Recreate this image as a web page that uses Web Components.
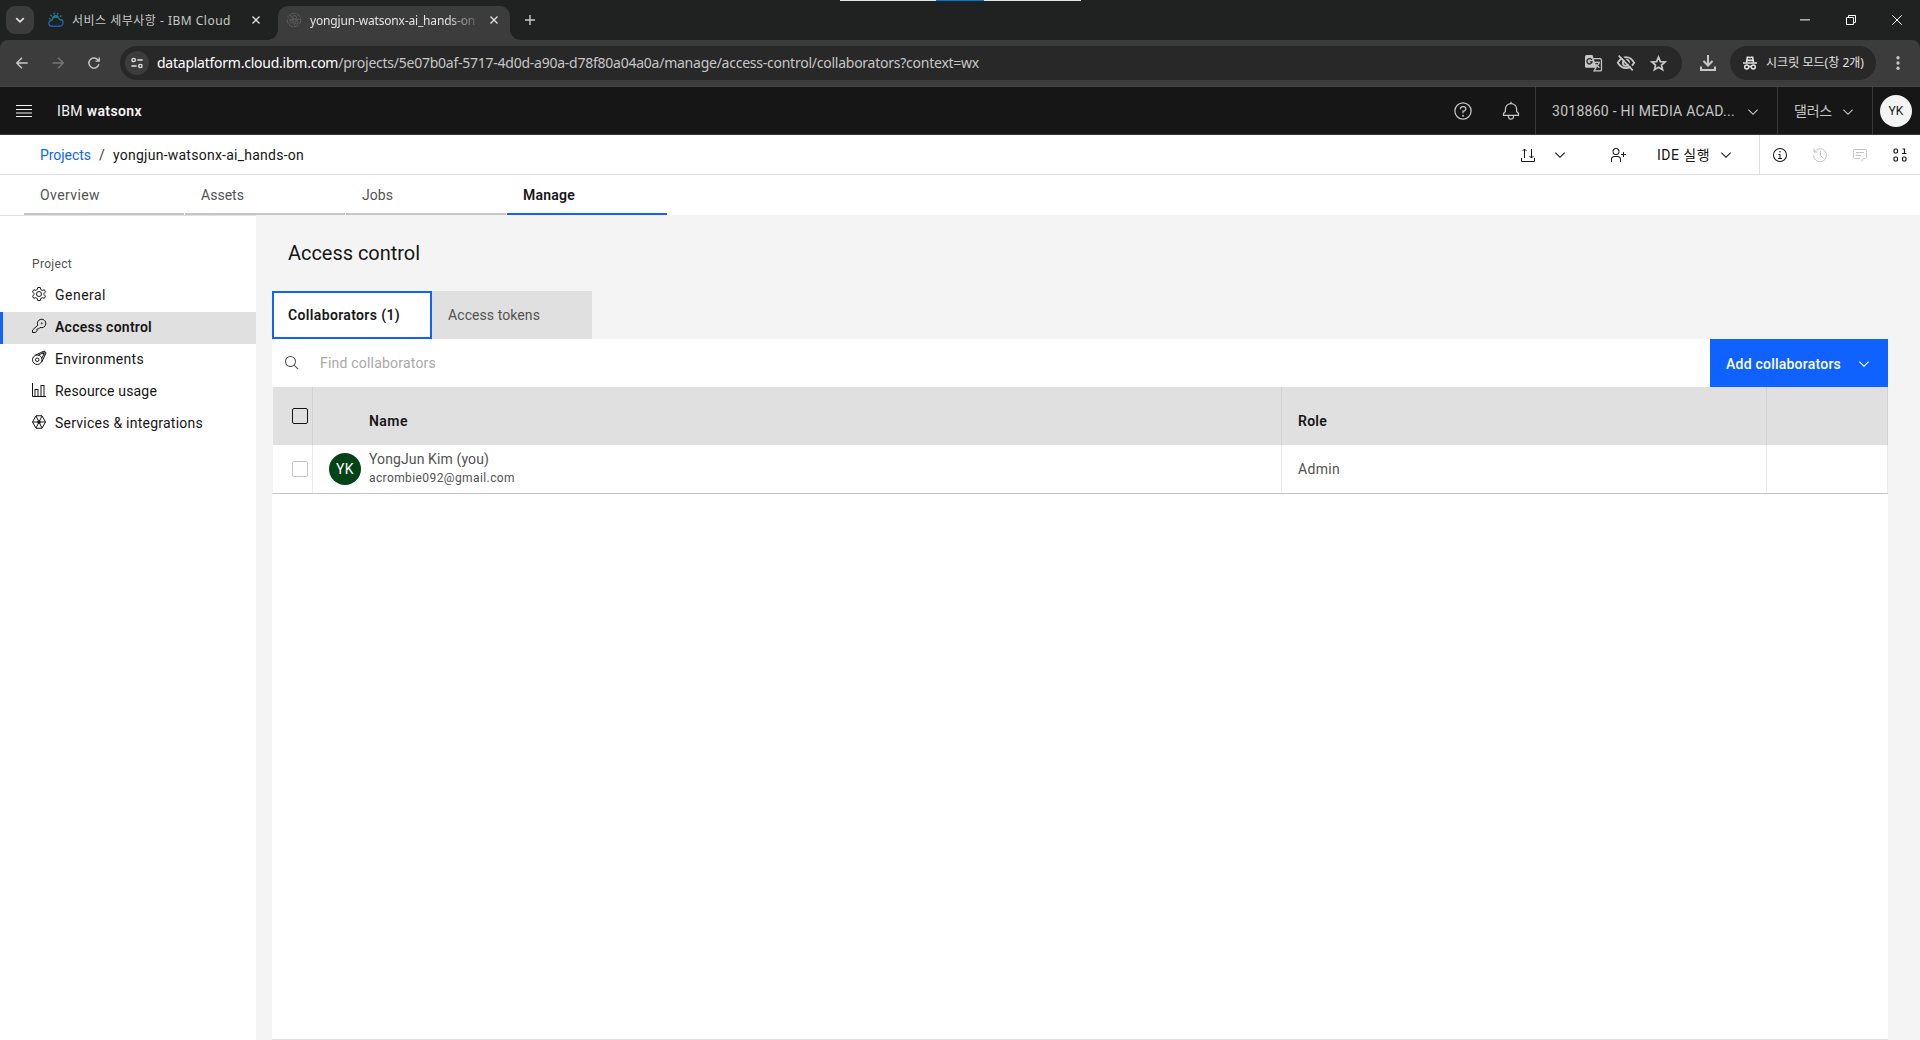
<!DOCTYPE html>
<html lang="ko">
<head>
<meta charset="utf-8">
<title>yongjun-watsonx-ai_hands-on</title>
<style>
  html, body { height: 100%; overflow: hidden; }
  body {
    margin: 0;
    background: #f4f4f4;
    color: #161616;
    font: 14px/18px Roboto, "Noto Sans CJK KR", sans-serif;
  }
</style>
</head>
<body>
<app-window></app-window>

<script>
// base class: every element renders its css() and html() in an open shadow root
class Base extends HTMLElement {

  constructor() {
    super();
    this.attachShadow({ mode: 'open' });
  }

  connectedCallback() {
    this.render();
  }

  render() {
    this.shadowRoot.innerHTML = `
      <style>
        *, :host { box-sizing: border-box; }
        :host { display: flex; }
        ${this.css()}
      </style>
      ${this.html()}`;
  }

  html() { return '<slot></slot>'; }
  css() { return ''; }
}

const circle = '<path d="M16,2A14,14,0,1,0,30,16,14,14,0,0,0,16,2Zm0,26A12,12,0,1,1,28,16,12,12,0,0,1,16,28Z"/>';

// all on a 32 x 32 grid, "line" icons are stroked
const ICONS = {
  chevron: '<path d="M16 22L6 12 7.4 10.6 16 19.2 24.6 10.6 26 12z"/>',
  help: circle + '<circle cx="16" cy="23.5" r="1.5"/><path d="M17,8H15.5A4.49,4.49,0,0,0,11,12.5V13h2v-.5A2.5,2.5,0,0,1,15.5,10H17a2.5,2.5,0,0,1,0,5H15v4.5h2V17a4.5,4.5,0,0,0,0-9Z"/>',
  info: circle + '<path d="M17 22L17 14 13 14 13 16 15 16 15 22 12 22 12 24 20 24 20 22 17 22z"/><circle cx="16" cy="9.5" r="1.5"/>',
  bell: '<path d="M28.7071,19.293,26,16.5859V13a10.0136,10.0136,0,0,0-9-9.9492V1H15V3.0508A10.0136,10.0136,0,0,0,6,13v3.5859L3.2929,19.293A1,1,0,0,0,3,20v3a1,1,0,0,0,1,1h7v.7768a5.152,5.152,0,0,0,4.5,5.1987A5.0057,5.0057,0,0,0,21,25V24h7a1,1,0,0,0,1-1V20A1,1,0,0,0,28.7071,19.293ZM19,25a3,3,0,0,1-6,0V24h6Zm8-3H5V20.4141L7.707,17.707A1,1,0,0,0,8,17V13a8,8,0,0,1,16,0v4a1,1,0,0,0,.293.707L27,20.4141Z"/>',
  userAdd: '<path d="M32 14L28 14 28 10 26 10 26 14 22 14 22 16 26 16 26 20 28 20 28 16 32 16 32 14z"/><path d="M12,4A5,5,0,1,1,7,9a5,5,0,0,1,5-5m0-2a7,7,0,1,0,7,7A7,7,0,0,0,12,2Z"/><path d="M22,30H20V25a5,5,0,0,0-5-5H9a5,5,0,0,0-5,5v5H2V25a7,7,0,0,1,7-7h6a7,7,0,0,1,7,7Z"/>',
  search: '<path d="M29,27.5859l-7.5521-7.5521a11.0177,11.0177,0,1,0-1.4141,1.4141L27.5859,29ZM4,13a9,9,0,1,1,9,9A9.01,9.01,0,0,1,4,13Z"/>',
  menu: '<path d="M0 4h32v2H0zM0 12h32v2H0zM0 19h32v2H0zM0 26h32v2H0z"/>',
  transfer: '<g class="line"><path d="M3 22v7h26v-7M9 22V4M5 8l4-4 4 4M23 4v18M19 18l4 4 4-4"/></g>',
  history: '<g class="line"><path d="M4 3v7h7M4.700 10A13 13 0 1 1 3 17M17 8v9l6 6"/></g>',
  comment: '<g class="line"><path d="M19 29l4-6h4a2 2 0 0 0 2-2V7a2 2 0 0 0-2-2H5a2 2 0 0 0-2 2v14a2 2 0 0 0 2 2h11M8 11h16M8 17h10"/></g>',
  data: '<g class="line" stroke-width="2.400"><rect x="4" y="4" width="7" height="8" rx="2.500"/><rect x="4" y="20" width="7" height="8" rx="2.500"/><rect x="21" y="20" width="7" height="8" rx="2.500"/><path d="M21 4h4v9M20 13h9"/></g>',
  gear: '<g class="line"><circle cx="16" cy="16" r="5"/><path d="M13.500 3h5l1 4 3 1.700 4-1.100 2.500 4.300-2.900 2.900v2.500l2.900 2.900-2.500 4.300-4-1.100-3 1.700-1 4h-5l-1-4-3-1.700-4 1.100L3 20.200l2.900-2.900v-2.500L3 11.900l2.500-4.300 4 1.100 3-1.700z"/></g>',
  key: '<g class="line"><path d="M13.500 14.500a8.500 8.500 0 1 1 4.500 4.300L15 22h-3v3L9 29H3v-5z"/><circle cx="21.500" cy="10.500" r="1"/></g>',
  env: '<g class="line"><circle cx="12.500" cy="19.500" r="9.500"/><circle cx="12.500" cy="19.500" r="3.500"/><path d="M8.500 10.500L25 2.500c3-.500 5 1.500 4.500 4.500L21.500 24M15 10l9-4 2 2-4.500 9"/><circle cx="26" cy="6" r="2.500"/></g>',
  bars: '<path d="M27,28V6H19V28H15V14H7V28H4V2H2V28a2,2,0,0,0,2,2H30V28ZM13,28H9V16h4Zm12,0H21V8h4Z"/>',
  services: '<g class="line"><path d="M10 3.500h12L29 16l-7 12.500H10L3 16zM3 16h26M10 4l12 24M22 4L10 28"/></g><circle cx="16" cy="16" r="3.500"/>',
  back: '<g class="line" stroke-width="3.800"><path d="M31 16H3M16 2L2 16l14 14"/></g>',
  forward: '<g class="line" stroke-width="3.800"><path d="M1 16h28M16 2l14 14-14 14"/></g>',
  reload: '<g class="line" stroke-width="3.800"><path d="M29 19a13.500 13.500 0 1 1-2-10.500l2 2M30 1v10H20"/></g>',
  tune: '<g class="line" stroke-width="3.600"><circle cx="7" cy="8" r="4.500"/><path d="M17 8h14M1 24h14"/><circle cx="25" cy="24" r="4.500"/></g>',
  down: '<g class="line" stroke-width="4.500"><path d="M6 11l10 10 10-10"/></g>',
  close: '<g class="line" stroke-width="5"><path d="M2 2l28 28M30 2L2 30"/></g>',
  plus: '<g class="line" stroke-width="4.500"><path d="M16 0v32M0 16h32"/></g>',
  minimize: '<path d="M0 14h32v3.200H0z"/>',
  restore: '<g class="line" stroke-width="3.200"><path d="M1.600 8h22.400v22.400H1.600zM8 8V1.600h22.400V24H24"/></g>',
  winClose: '<g class="line" stroke-width="3.200"><path d="M1 1l30 30M31 1L1 31"/></g>',
  more: '<circle cx="16" cy="4" r="3.800"/><circle cx="16" cy="16" r="3.800"/><circle cx="16" cy="28" r="3.800"/>',
  star: '<g class="line" stroke-width="3.200"><path d="M16 4l3.500 8.400 9 .8-6.900 5.900 2.100 8.800L16 23.200l-7.700 4.700 2.100-8.800-6.900-5.900 9-.8z"/></g>',
  eyeOff: '<g class="line" stroke-width="3.200"><path d="M1.500 15.500C5 9 10 5.500 16 5.500s11 3.500 14.500 10c-3.500 6-8.500 9.500-14.500 9.500S5 21.500 1.500 15.500z"/><circle cx="16" cy="15.500" r="5.500"/></g><path d="M6 1.500l24 25" stroke="#282828" stroke-width="3"/><path d="M3 3l25 26" stroke="currentColor" stroke-width="3"/>',
  download: '<g class="line" stroke-width="4"><path d="M16 0v20M7 12l9 9 9-9M2 23v7h28v-7"/></g>',
  translate: '<path d="M3 0h11l8 24H3a3 3 0 0 1-3-3V3a3 3 0 0 1 3-3z"/><g class="line" stroke-width="2.400"><path d="M16 7h12a3 3 0 0 1 3 3v18a2 2 0 0 1-2 2H17l4-7M18 14h10M23 12v2M27 14c-1 5-4 7-7 9M20 17l7 7"/></g><path d="M13 9.500a5 5 0 1 0 .5 3.500H9" fill="none" stroke="#282828" stroke-width="2.400"/>',
  incognito: '<g class="line" stroke-width="3.600"><path d="M8 14l2-11h3l3 1 3-1h3l2 11M9 10h14M0 16h32"/><circle cx="8.500" cy="25" r="4.500"/><circle cx="23.500" cy="25" r="4.500"/><path d="M13 24h6"/></g>',
  cloud: '<defs><linearGradient id="g" gradientUnits="userSpaceOnUse" x1="0" y1="0" x2="0" y2="32"><stop offset="0" stop-color="#2d8b85"/><stop offset=".55" stop-color="#1e6f9a"/><stop offset="1" stop-color="#1356d0"/></linearGradient></defs><g fill="none" stroke="url(#g)" stroke-width="2.600"><path d="M8 28.500a6 6 0 0 1-.5-12A8.500 8.500 0 0 1 23.500 15c4 .2 6.500 3 6.500 6.700 0 4-3 6.800-6.800 6.800zM8.500 14a7 7 0 0 1 12-4.500M2 13l3 1.200M5 6l2.500 2.500M12 1.500l.8 3.500M20 2l-1.200 3.200M27 7l-3 2.500"/></g>',
  watsonx: '<g class="line" stroke-width="2"><circle cx="16" cy="16" r="13.500" stroke-dasharray="9 2.500"/><circle cx="17" cy="11" r="4"/><circle cx="11" cy="19" r="3"/><circle cx="21" cy="21" r="3"/><path d="M9 6c1 7 8 9 18 9M6 14c8 0 10 8 11 15M14 14l-3 3M19 15l2 3"/></g>'
};

class UiIcon extends Base {
  css() {
    const size = this.getAttribute('size') || 16;
    return `
      :host { display: block; flex: none; width: ${size}px; height: ${size}px; }
      svg { display: block; fill: currentColor; overflow: visible; }
      .line { fill: none; stroke: currentColor; }
      .line:not([stroke-width]) { stroke-width: 2; }`;
  }
  html() {
    const size = this.getAttribute('size') || 16;
    return `<svg width="${size}" height="${size}" viewBox="0 0 32 32">${ICONS[this.getAttribute('name')]}</svg>`;
  }
}

// one line of text, tracked so that it takes the width it is given
class UiText extends Base {
  css() {
    return `
      :host { display: block; flex: none; width: max-content; white-space: nowrap; }`;
  }
  connectedCallback() {
    this.render();
    const target = Number(this.getAttribute('width'));
    if (!target) return;
    const spacing = (target - this.getBoundingClientRect().width) / this.textContent.length;
    this.style.letterSpacing = spacing.toFixed(3) + 'px';
    this.style.width = target + 'px';
  }
}

class UiAvatar extends Base {
  css() {
    return `
      :host {
        flex: none;
        align-items: center;
        justify-content: center;
        width: 32px;
        height: 32px;
        border-radius: 50%;
        background: var(--avatar-bg, #f4f4f4);
        color: var(--avatar-color, #161616);
      }`;
  }
}

class BrowserTab extends Base {
  css() {
    return `
      :host {
        position: relative;
        align-items: center;
        height: 34px;
        padding: 0 0 6px 8px;
        border-radius: 10px 10px 0 0;
        color: #c7c9c8;
      }
      :host([active]) { background: #3c3c3c; color: #e3e3e3; }
      :host([active])::before, :host([active])::after {
        content: '';
        position: absolute;
        bottom: 0;
        width: 10px;
        height: 10px;
      }
      :host([active])::before { left: -10px; background: radial-gradient(circle at 0 0, transparent 9.5px, #3c3c3c 10px); }
      :host([active])::after { right: -10px; background: radial-gradient(circle at 100% 0, transparent 9.5px, #3c3c3c 10px); }
      .label { flex: 1; min-width: 0; margin: 2px 0 0 8px; overflow: hidden; }
      :host([active]) .label { flex: none; width: 166px; -webkit-mask: linear-gradient(90deg, #000 136px, rgba(0,0,0,.25) 164px); mask: linear-gradient(90deg, #000 136px, rgba(0,0,0,.25) 164px); }
      .close { margin: 0 12px 0 auto; color: #e3e3e3; }
      :host(:not([active])) .close { margin-right: 14px; }`;
  }
  html() {
    return `
      <slot name="icon"></slot>
      <div class="label"><slot></slot></div>
      <ui-icon class="close" name="close" size="8"></ui-icon>`;
  }
}

class BrowserTabs extends Base {
  css() {
    return `
      :host { position: relative; height: 40px; padding: 6px 18px 0 6px; background: #202221; font: 12px/16px "Noto Sans", "Noto Sans CJK KR", sans-serif; }
      .list { display: flex; align-items: center; justify-content: center; width: 28px; height: 28px; border-radius: 9px; background: #3c3c3c; color: #e3e3e3; }
      .first { width: 234px; margin: 0 0 0 6px; }
      .second { width: 232px; margin-left: 4px; }
      .new { margin: 9px 0 0 15px; color: #c7c9c8; }
      .window { display: flex; gap: 36px; margin: 9px 0 0 auto; color: #fff; }
      .peek { position: absolute; top: 0; left: 840px; width: 241px; height: 1px; background: linear-gradient(90deg, #e3e8e5 96px, #0078d4 96px 144px, #e3e8e5 144px); }
      .dim { color: #5c5c5c; }`;
  }
  html() {
    return `
      <div class="list"><ui-icon name="down" size="12"></ui-icon></div>
      <browser-tab class="first">
        <ui-icon slot="icon" name="cloud"></ui-icon>
        <ui-text width="159">서비스 세부사항 - IBM Cloud</ui-text>
      </browser-tab>
      <browser-tab class="second" active>
        <ui-icon slot="icon" class="dim" name="watsonx"></ui-icon>
        <ui-text width="165">yongjun-watsonx-ai_hands-on</ui-text>
      </browser-tab>
      <ui-icon class="new" name="plus" size="10"></ui-icon>
      <div class="window">
        <ui-icon name="minimize" size="10"></ui-icon>
        <ui-icon name="restore" size="10"></ui-icon>
        <ui-icon name="winClose" size="10"></ui-icon>
      </div>
      <div class="peek"></div>`;
  }
}

class BrowserToolbar extends Base {
  css() {
    return `
      :host { background: #202221; font: 14px/20px "Noto Sans", "Noto Sans CJK KR", sans-serif; }
      .bar { display: flex; align-items: center; width: 100%; height: 47px; padding: 0 15px 0 16px; border-bottom: 1px solid #474747; border-radius: 8px 8px 0 0; background: #3c3c3c; color: #c7c7c7; }
      .nav { display: flex; gap: 24px; }
      .dim { color: #757575; }
      .url { display: flex; align-items: center; width: 1562px; height: 34px; margin-left: 20px; padding: 0 15px 0 5px; border-radius: 17px; background: #282828; }
      .site { display: flex; align-items: center; justify-content: center; width: 24px; height: 24px; margin-right: 8px; border-radius: 50%; background: #3c3c3c; color: #e3e3e3; }
      .host { color: #fff; }
      .tools { display: flex; align-items: center; gap: 15px; margin-left: auto; }
      .mode { display: flex; align-items: center; width: 146px; height: 34px; margin-left: 14px; padding-left: 13px; border-radius: 17px; background: #282828; color: #e3e3e3; font-size: 12px; }
      .mode ui-text { margin-left: 9px; }
      .more { margin-left: 15px; }
      .load { margin-left: 18px; }`;
  }
  html() {
    return `
      <div class="bar">
        <div class="nav">
          <ui-icon name="back" size="12"></ui-icon>
          <ui-icon class="dim" name="forward" size="12"></ui-icon>
          <ui-icon name="reload" size="12"></ui-icon>
        </div>
        <div class="url">
          <div class="site"><ui-icon name="tune" size="12"></ui-icon></div>
          <ui-text width="822"><span class="host">dataplatform.cloud.ibm.com</span>/projects/5e07b0af-5717-4d0d-a90a-d78f80a04a0a/manage/access-control/collaborators?context=wx</ui-text>
          <div class="tools">
            <ui-icon name="translate" size="17"></ui-icon>
            <ui-icon name="eyeOff" size="18"></ui-icon>
            <ui-icon name="star" size="17"></ui-icon>
          </div>
        </div>
        <ui-icon class="load" name="download" size="16"></ui-icon>
        <div class="mode">
          <ui-icon name="incognito" size="14"></ui-icon>
          <ui-text width="98">시크릿 모드(창 2개)</ui-text>
        </div>
        <ui-icon class="more" name="more" size="14"></ui-icon>
      </div>`;
  }
}

class AppHeader extends Base {
  css() {
    return `
      :host { align-items: stretch; height: 48px; padding-left: 16px; border-bottom: 1px solid #393939; background: #161616; color: #c6c6c6; }
      .menu { color: #f4f4f4; }
      .brand { margin-left: 25px; color: #f4f4f4; }
      .brand b { font-weight: 600; }
      .menu, .brand, .help, .bell { align-self: center; }
      .help { margin-left: auto; }
      .bell { margin: 0 14px 0 28px; }
      .cell { display: flex; align-items: center; align-self: stretch; padding-left: 16px; border-left: 1px solid #393939; }
      .account { width: 242px; }
      .region { width: 95px; }
      .user { width: 48px; padding-left: 7px; font-size: 12px; }
      .account ui-icon { margin: 2px 0 0 10px; }
      .region ui-icon { margin: 2px 0 0 8px; }`;
  }
  html() {
    return `
      <ui-icon class="menu" name="menu"></ui-icon>
      <ui-text class="brand" width="85">IBM <b>watsonx</b></ui-text>
      <ui-icon class="help" name="help" size="20"></ui-icon>
      <ui-icon class="bell" name="bell" size="20"></ui-icon>
      <div class="cell account"><ui-text width="183">3018860 - HI MEDIA ACAD...</ui-text><ui-icon name="chevron"></ui-icon></div>
      <div class="cell region"><ui-text width="38">댈러스</ui-text><ui-icon name="chevron"></ui-icon></div>
      <div class="cell user"><ui-avatar><ui-text width="15">YK</ui-text></ui-avatar></div>`;
  }
}

class ProjectBar extends Base {
  css() {
    return `
      :host { align-items: center; height: 40px; padding-left: 40px; border-bottom: 1px solid #e0e0e0; background: #fff; }
      .link { color: #0f62fe; }
      .slash { margin: 0 9px 0 8px; color: #393939; }
      .load { margin-left: auto; }
      .load + ui-icon { margin-left: 16px; }
      .user { margin-left: 42px; }
      .ide { margin: 0 8px 0 31px; }
      .side { display: flex; align-items: center; align-self: stretch; gap: 24px; margin-left: 25px; padding: 0 12px; border-left: 1px solid #e0e0e0; }
      .off { color: #c6c6c6; }`;
  }
  html() {
    return `
      <ui-text class="link" width="51">Projects</ui-text>
      <ui-text class="slash" width="5">/</ui-text>
      <ui-text width="191">yongjun-watsonx-ai_hands-on</ui-text>
      <ui-icon class="load" name="transfer"></ui-icon>
      <ui-icon name="chevron"></ui-icon>
      <ui-icon class="user" name="userAdd"></ui-icon>
      <ui-text class="ide" width="53">IDE 실행</ui-text>
      <ui-icon name="chevron"></ui-icon>
      <div class="side">
        <ui-icon name="info"></ui-icon>
        <ui-icon class="off" name="history"></ui-icon>
        <ui-icon class="off" name="comment"></ui-icon>
        <ui-icon name="data"></ui-icon>
      </div>`;
  }
}

class ProjectTabs extends Base {
  css() {
    return `
      :host { gap: 1px; height: 40px; padding-left: 24px; background: #fff; }
      .tab { display: flex; align-items: center; width: 160px; padding: 2px 0 0 16px; border-bottom: 2px solid #c6c6c6; color: #525252; }
      .active { border-color: #0f62fe; color: #161616; font-weight: 600; }`;
  }
  html() {
    return `
      <div class="tab"><ui-text width="60">Overview</ui-text></div>
      <div class="tab"><ui-text width="43">Assets</ui-text></div>
      <div class="tab"><ui-text width="31">Jobs</ui-text></div>
      <div class="tab active"><ui-text width="52">Manage</ui-text></div>`;
  }
}

class NavItem extends Base {
  css() {
    return `
      :host { align-items: center; height: 32px; padding-left: 28px; border-left: 3px solid transparent; }
      :host([active]) { border-color: #0f62fe; background: #e0e0e0; font-weight: 600; }
      ui-icon { margin: 0 8px 4px 0; }
      ::slotted(*) { margin-bottom: 2px; }`;
  }
  html() {
    return `<ui-icon name="${this.getAttribute('icon')}"></ui-icon><slot></slot>`;
  }
}

class SideNav extends Base {
  css() {
    return `
      :host { flex: none; flex-direction: column; width: 256px; padding-top: 39px; border-top: 1px solid #e0e0e0; background: #fff; }
      .heading { height: 25px; padding-left: 32px; color: #525252; font-size: 12px; }`;
  }
  html() {
    return `
      <div class="heading"><ui-text width="40">Project</ui-text></div>
      <nav-item icon="gear"><ui-text width="51">General</ui-text></nav-item>
      <nav-item icon="key" active><ui-text width="97">Access control</ui-text></nav-item>
      <nav-item icon="env"><ui-text width="89">Environments</ui-text></nav-item>
      <nav-item icon="bars"><ui-text width="102">Resource usage</ui-text></nav-item>
      <nav-item icon="services"><ui-text width="148">Services &amp; integrations</ui-text></nav-item>`;
  }
}

class CollaboratorTable extends Base {
  css() {
    return `
      :host { flex-direction: column; }
      .row { display: grid; grid-template-columns: 40px 969px 485px 1fr; height: 49px; border-bottom: 1px solid #c6c6c6; border-left: 1px solid #f4f4f4; color: #525252; }
      .head { height: 58px; border-bottom: 0; background: #e0e0e0; color: #161616; font-weight: 600; }
      .row > div { display: flex; align-items: center; border-right: 1px solid #ebebeb; }
      .head > div { border-color: #d1d1d1; }
      .box { width: 16px; height: 16px; margin-left: 19px; border: 1px solid #c6c6c6; border-radius: 2px; }
      .head .box { border-color: #161616; }
      .head ui-text { margin-top: 9px; }
      .name { padding-left: 56px; }
      .role { padding-left: 16px; }
      .person { padding-left: 16px; --avatar-bg: #044317; --avatar-color: #fff; }
      .lines { display: flex; flex-direction: column; gap: 2px; margin: 0 0 1px 8px; line-height: 17px; }
      .mail { font-size: 12px; }`;
  }
  html() {
    return `
      <div class="row head">
        <div><span class="box"></span></div>
        <div class="name"><ui-text width="39">Name</ui-text></div>
        <div class="role"><ui-text width="29">Role</ui-text></div>
        <div></div>
      </div>
      <div class="row">
        <div><span class="box"></span></div>
        <div class="person">
          <ui-avatar><ui-text width="18">YK</ui-text></ui-avatar>
          <div class="lines">
            <ui-text width="120">YongJun Kim (you)</ui-text>
            <ui-text class="mail" width="146">acrombie092@gmail.com</ui-text>
          </div>
        </div>
        <div class="role"><ui-text width="42">Admin</ui-text></div>
        <div></div>
      </div>`;
  }
}

class AccessPanel extends Base {
  css() {
    return `
      :host { flex: 1; flex-direction: column; padding: 0 32px 0 16px; background: #f4f4f4; }
      h1 { display: flex; margin: 0; height: 76px; padding: 26px 0 0 16px; font: 400 20px/24px "Roboto", sans-serif; }
      .tabs { display: flex; height: 48px; flex: none; }
      .tab { display: flex; align-items: center; width: 160px; padding: 0 16px; background: #e0e0e0; color: #525252; }
      .active { padding: 0 14px; border: 2px solid #0f62fe; background: #fff; color: #161616; font-weight: 600; }
      .panel { flex: 1; border-bottom: 1px solid #e0e0e0; background: #fff; }
      .tools { display: flex; height: 48px; }
      .search { display: flex; flex: 1; align-items: center; padding-left: 12px; color: #a8a8a8; }
      .search ui-icon { margin-right: 20px; color: #525252; }
      .add { display: flex; align-items: center; width: 178px; padding: 2px 0 0 16px; background: #0f62fe; color: #fff; font-weight: 500; }
      .add ui-icon { margin-left: 15px; }`;
  }
  html() {
    return `
      <h1><ui-text width="132">Access control</ui-text></h1>
      <div class="tabs">
        <div class="tab active"><ui-text width="112">Collaborators (1)</ui-text></div>
        <div class="tab"><ui-text width="92">Access tokens</ui-text></div>
      </div>
      <div class="panel">
        <div class="tools">
          <div class="search"><ui-icon name="search"></ui-icon><ui-text width="116">Find collaborators</ui-text></div>
          <div class="add"><ui-text width="115">Add collaborators</ui-text><ui-icon name="chevron"></ui-icon></div>
        </div>
        <collaborator-table></collaborator-table>
      </div>`;
  }
}

class AppWindow extends Base {
  css() {
    return `
      :host { flex-direction: column; height: 1040px; }
      main { display: flex; flex: 1; }`;
  }
  html() {
    return `
      <browser-tabs></browser-tabs>
      <browser-toolbar></browser-toolbar>
      <app-header></app-header>
      <project-bar></project-bar>
      <project-tabs></project-tabs>
      <main>
        <side-nav></side-nav>
        <access-panel></access-panel>
      </main>`;
  }
}

customElements.define('app-window', AppWindow);
customElements.define('browser-tabs', BrowserTabs);
customElements.define('browser-tab', BrowserTab);
customElements.define('browser-toolbar', BrowserToolbar);
customElements.define('app-header', AppHeader);
customElements.define('project-bar', ProjectBar);
customElements.define('project-tabs', ProjectTabs);
customElements.define('side-nav', SideNav);
customElements.define('nav-item', NavItem);
customElements.define('access-panel', AccessPanel);
customElements.define('collaborator-table', CollaboratorTable);
customElements.define('ui-avatar', UiAvatar);
customElements.define('ui-icon', UiIcon);
// last, because it measures text in its final styles
customElements.define('ui-text', UiText);
</script>
</body>
</html>
